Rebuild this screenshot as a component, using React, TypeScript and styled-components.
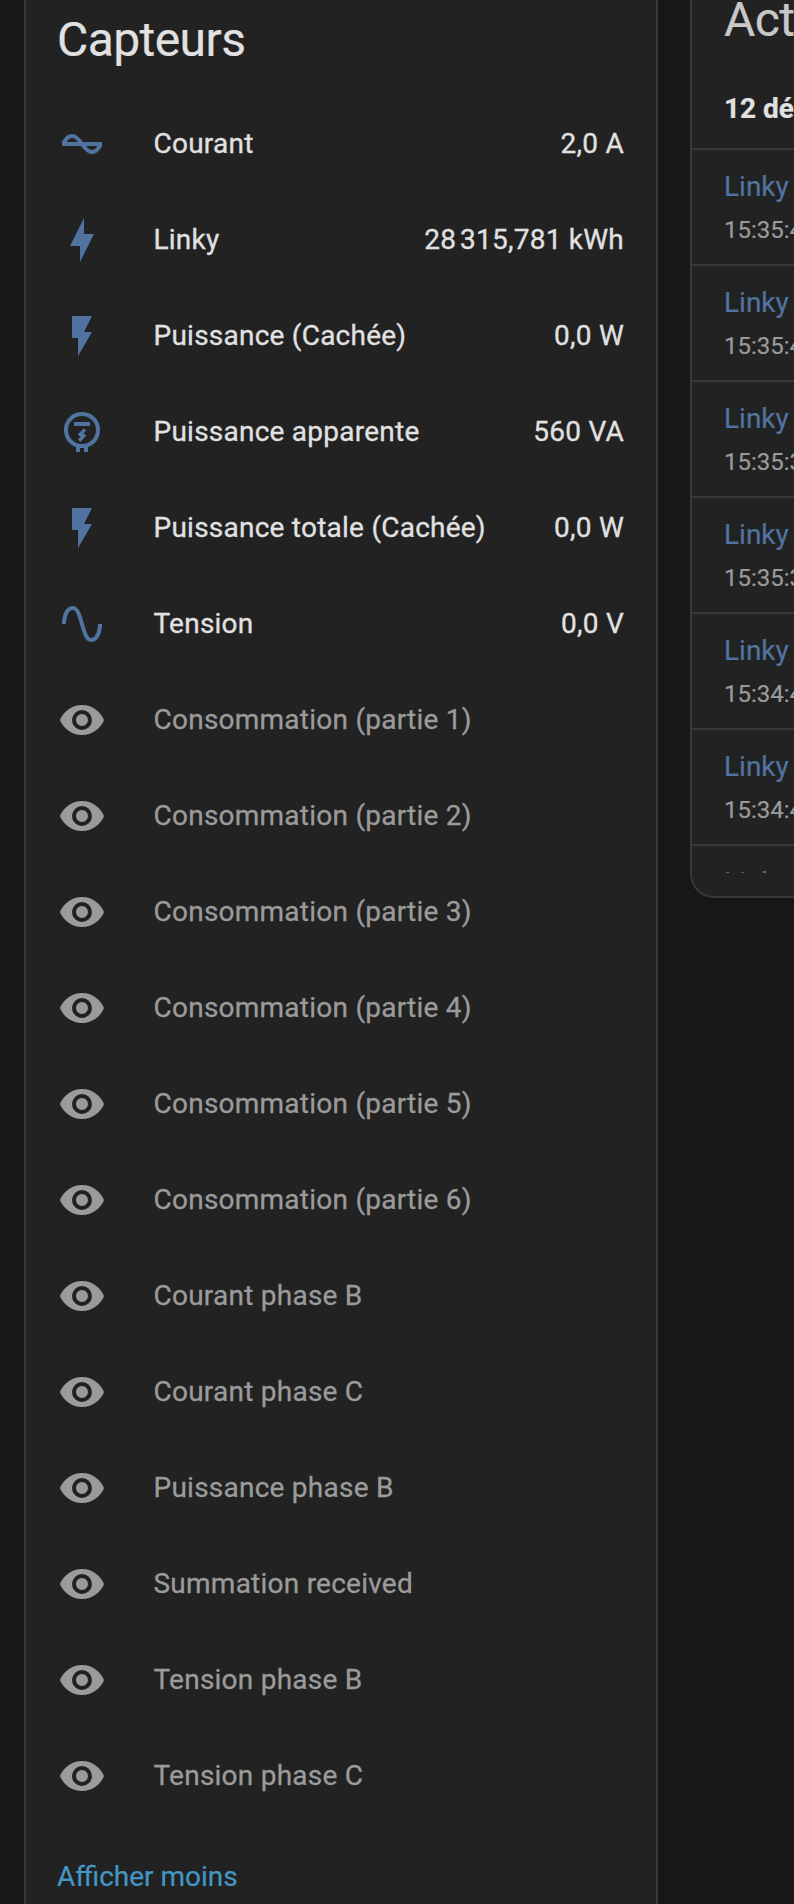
import React from 'react';
import styled, { createGlobalStyle } from 'styled-components';

const GlobalStyle = createGlobalStyle`
  html, body { margin: 0; background: #171717; overflow: hidden; }
  * { box-sizing: border-box; }
`;

const Page = styled.div`
  width: 794px;
  height: 1904px;
  overflow: hidden;
  background: #171717;
  padding-left: 24px;
  display: flex;
  align-items: flex-start;
  gap: 32px;
  font-family: Roboto, 'Liberation Sans', sans-serif;
  font-size: 28px;
  color: #e1e1e1;
  -webkit-text-stroke: 0.2px currentColor;
`;

const SensorsCard = styled.section`
  flex: none;
  width: 634px;
  height: 1904px;
  background: #222222;
  border: solid #383838;
  border-width: 0 2px;
  padding: 0 32px 0 31px;
`;

const LogbookCard = styled.section`
  flex: none;
  width: 634px;
  height: 898px;
  background: #222222;
  border: 2px solid #383838;
  border-top: 0;
  border-radius: 0 0 24px 24px;
  overflow: hidden;
`;

const Title = styled.h1<{ $muted?: boolean }>`
  margin: 0;
  height: ${(p) => (p.$muted ? 76 : 96)}px;
  padding: ${(p) => (p.$muted ? '0 32px' : '0')};
  line-height: ${(p) => (p.$muted ? 40 : 80)}px;
  font-size: 48px;
  font-weight: 400;
  letter-spacing: -0.576px;
  color: ${(p) => (p.$muted ? '#c8c8c8' : '#e1e1e1')};
`;

const SensorRow = styled.div<{ $hidden?: boolean }>`
  display: flex;
  align-items: center;
  height: 96px;
  padding-left: 1px;
  line-height: 40px;
  letter-spacing: 0.24px;
  white-space: nowrap;
  -webkit-text-stroke: 0.3px currentColor;
  color: ${(p) => (p.$hidden ? '#9b9b9b' : '#e1e1e1')};
`;

const Icon = styled.svg<{ $hidden?: boolean }>`
  flex: none;
  width: 48px;
  height: 48px;
  margin-right: 47.5px;
  fill: ${(p) => (p.$hidden ? '#9b9b9b' : '#50739f')};
`;

const Name = styled.span`
  flex: 1;
`;

const ShowLess = styled.div`
  height: 80px;
  line-height: 106px;
  color: #4497c4;
`;

const DateHeading = styled.div`
  height: 72px;
  padding: 0 32px;
  line-height: 66px;
  font-weight: 700;
`;

const Entries = styled.div`
  height: 725px;
  overflow: hidden;
`;

const Entry = styled.div`
  height: 116px;
  padding: 19px 32px 0;
  border-top: 2px solid #383838;
  white-space: nowrap;
`;

const EntryName = styled.div`
  height: 41px;
  line-height: 36px;
  color: #50739f;
`;

const EntryTime = styled.div`
  font-size: 24px;
  line-height: 40px;
  color: #9b9b9b;
`;

const icons = {
  current:
    'M12.43 11C12.28 10.84 10 7 7 7S2.32 10.18 2 11V13H11.57C11.72 13.16 14 17 17 17S21.68 13.82 22 13V11H12.43M7 9C8.17 9 9.18 9.85 10 11H4.31C4.78 10.17 5.54 9 7 9M17 15C15.83 15 14.82 14.15 14 13H19.69C19.22 13.83 18.46 15 17 15Z',
  bolt: 'M11 15H6L13 1V9H18L11 23V15Z',
  flash: 'M7,2V13H10V22L17,10H13L17,2H7Z',
  meter:
    'M12 2A9 9 0 0 0 9 19.5V22H11V20H13V22H15V19.5A9 9 0 0 0 12 2M12 4A7 7 0 1 1 12 18A7 7 0 0 1 12 4M8 7V9H16V7H8M13 10.1L9.8 13.3L11.2 14.4L10 15.7L11.2 17L14.2 13.8L12.8 12.7L14.1 11.3Z',
  sine: 'M16.5,21C13.5,21 12.31,16.76 11.05,12.28C10.14,9.04 9,5 7.5,5C4.11,5 4,11.93 4,12H2C2,11.63 2.06,3 7.5,3C10.5,3 11.71,7.25 12.97,11.74C13.83,14.8 15,19 16.5,19C19.94,19 20.03,12.07 20.03,12H22.03C22.03,12.37 21.97,21 16.5,21Z',
  eye: 'M12,9A3,3 0 0,0 9,12A3,3 0 0,0 12,15A3,3 0 0,0 15,12A3,3 0 0,0 12,9M12,17A5,5 0 0,1 7,12A5,5 0 0,1 12,7A5,5 0 0,1 17,12A5,5 0 0,1 12,17M12,4.5C7,4.5 2.73,7.61 1,12C2.73,16.39 7,19.5 12,19.5C17,19.5 21.27,16.39 23,12C21.27,7.61 17,4.5 12,4.5Z',
};

const sensors: { icon: keyof typeof icons; name: string; value: string }[] = [
  { icon: 'current', name: 'Courant', value: '2,0 A' },
  { icon: 'bolt', name: 'Linky', value: '28\u202f315,781 kWh' },
  { icon: 'flash', name: 'Puissance (Cachée)', value: '0,0 W' },
  { icon: 'meter', name: 'Puissance apparente', value: '560 VA' },
  { icon: 'flash', name: 'Puissance totale (Cachée)', value: '0,0 W' },
  { icon: 'sine', name: 'Tension', value: '0,0 V' },
];

const hiddenSensors = [
  'Consommation (partie 1)',
  'Consommation (partie 2)',
  'Consommation (partie 3)',
  'Consommation (partie 4)',
  'Consommation (partie 5)',
  'Consommation (partie 6)',
  'Courant phase B',
  'Courant phase C',
  'Puissance phase B',
  'Summation received',
  'Tension phase B',
  'Tension phase C',
];

const entries = ['15:35:4', '15:35:4', '15:35:3', '15:35:3', '15:34:4', '15:34:4', '15:34:3'];

export default function App() {
  return (
    <>
      <GlobalStyle />
      <Page>
        <SensorsCard>
          <Title>Capteurs</Title>
          {sensors.map((s) => (
            <SensorRow key={s.name}>
              <Icon viewBox="0 0 24 24">
                <path fillRule="evenodd" d={icons[s.icon]} />
              </Icon>
              <Name>{s.name}</Name>
              <span>{s.value}</span>
            </SensorRow>
          ))}
          {hiddenSensors.map((name) => (
            <SensorRow key={name} $hidden>
              <Icon viewBox="0 0 24 24" $hidden>
                <path fillRule="evenodd" d={icons.eye} />
              </Icon>
              <Name>{name}</Name>
            </SensorRow>
          ))}
          <ShowLess>Afficher moins</ShowLess>
        </SensorsCard>
        <LogbookCard>
          <Title $muted>Act</Title>
          <DateHeading>12 dé</DateHeading>
          <Entries>
            {entries.map((time, i) => (
              <Entry key={i}>
                <EntryName>Linky</EntryName>
                <EntryTime>{time}</EntryTime>
              </Entry>
            ))}
          </Entries>
        </LogbookCard>
      </Page>
    </>
  );
}
